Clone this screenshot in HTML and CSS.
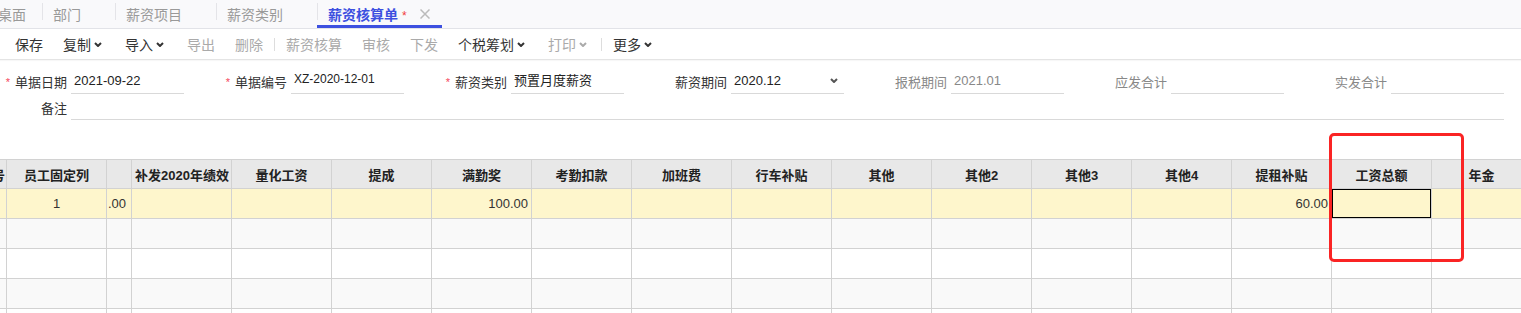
FILE: index.html
```html
<!DOCTYPE html>
<html lang="zh-CN">
<head>
  <meta charset="UTF-8" />
  <meta name="viewport" content="width=device-width, initial-scale=1" />
  <title>薪资核算单</title>
  <link rel="stylesheet" href="styles.css">
</head>
<body>
<div class="page">
  <nav class="tabs">
    <div class="tab tab-home">桌面</div>
    <span class="tab-sep"></span>
    <div class="tab">部门</div>
    <span class="tab-sep"></span>
    <div class="tab">薪资项目</div>
    <span class="tab-sep"></span>
    <div class="tab">薪资类别</div>
    <span class="tab-sep"></span>
    <div class="tab active">薪资核算单<span class="dirty">*</span>
      <svg class="close" width="10" height="10" viewBox="0 0 10 10"><path d="M0.5 0.5L9.5 9.5M9.5 0.5L0.5 9.5" /></svg>
    </div>
  </nav>

  <div class="toolbar">
    <span class="btn">保存</span>
    <span class="btn">复制<svg class="caret" width="8" height="5" viewBox="0 0 8 5"><polyline points="1,1 4,4 7,1" /></svg></span>
    <span class="btn">导入<svg class="caret" width="8" height="5" viewBox="0 0 8 5"><polyline points="1,1 4,4 7,1" /></svg></span>
    <span class="btn off">导出</span>
    <span class="btn off">删除</span>
    <span class="bar-sep"></span>
    <span class="btn off">薪资核算</span>
    <span class="btn off">审核</span>
    <span class="btn off">下发</span>
    <span class="btn">个税筹划<svg class="caret" width="8" height="5" viewBox="0 0 8 5"><polyline points="1,1 4,4 7,1" /></svg></span>
    <span class="btn off">打印<svg class="caret" width="8" height="5" viewBox="0 0 8 5"><polyline points="1,1 4,4 7,1" /></svg></span>
    <span class="bar-sep"></span>
    <span class="btn">更多<svg class="caret" width="8" height="5" viewBox="0 0 8 5"><polyline points="1,1 4,4 7,1" /></svg></span>
  </div>

  <form class="head-form">
    <div class="form-row">
      <div class="field">
        <label><span class="req">*</span>单据日期</label>
        <div class="value">2021-09-22</div>
      </div>
      <div class="field">
        <label><span class="req">*</span>单据编号</label>
        <div class="value code">XZ-2020-12-01</div>
      </div>
      <div class="field">
        <label><span class="req">*</span>薪资类别</label>
        <div class="value">预置月度薪资</div>
      </div>
      <div class="field">
        <label>薪资期间</label>
        <div class="value select">2020.12<svg class="caret" width="8" height="5" viewBox="0 0 8 5"><polyline points="1,1 4,4 7,1" /></svg></div>
      </div>
      <div class="field muted">
        <label>报税期间</label>
        <div class="value">2021.01</div>
      </div>
      <div class="field muted">
        <label>应发合计</label>
        <div class="value"></div>
      </div>
      <div class="field muted">
        <label>实发合计</label>
        <div class="value"></div>
      </div>
    </div>
    <div class="form-row">
      <div class="field wide">
        <label>备注</label>
        <div class="value"></div>
      </div>
    </div>
  </form>

  <div class="grid-wrap">
    <table class="grid">
      <colgroup>
        <col class="c-no"><col class="c-w"><col class="c-split">
        <col class="c-w"><col class="c-w"><col class="c-w"><col class="c-w"><col class="c-w">
        <col class="c-w"><col class="c-w"><col class="c-w"><col class="c-w"><col class="c-w">
        <col class="c-w"><col class="c-w"><col class="c-w"><col class="c-w">
      </colgroup>
      <thead>
        <tr>
          <th class="num">序号</th><th>员工固定列</th><th></th>
          <th>补发2020年绩效</th><th>量化工资</th><th>提成</th><th>满勤奖</th><th>考勤扣款</th>
          <th>加班费</th><th>行车补贴</th><th>其他</th><th>其他2</th><th>其他3</th>
          <th>其他4</th><th>提租补贴</th><th>工资总额</th><th>年金</th>
        </tr>
      </thead>
      <tbody>
        <tr class="current">
          <td></td><td class="center">1</td><td class="cut">.00</td>
          <td></td><td></td><td></td><td class="amt">100.00</td><td></td>
          <td></td><td></td><td></td><td></td><td></td>
          <td></td><td class="amt">60.00</td><td class="focus"></td><td></td>
        </tr>
        <tr class="alt">
          <td></td><td></td><td></td><td></td><td></td><td></td><td></td><td></td><td></td>
          <td></td><td></td><td></td><td></td><td></td><td></td><td></td><td></td>
        </tr>
        <tr>
          <td></td><td></td><td></td><td></td><td></td><td></td><td></td><td></td><td></td>
          <td></td><td></td><td></td><td></td><td></td><td></td><td></td><td></td>
        </tr>
        <tr class="alt">
          <td></td><td></td><td></td><td></td><td></td><td></td><td></td><td></td><td></td>
          <td></td><td></td><td></td><td></td><td></td><td></td><td></td><td></td>
        </tr>
        <tr>
          <td></td><td></td><td></td><td></td><td></td><td></td><td></td><td></td><td></td>
          <td></td><td></td><td></td><td></td><td></td><td></td><td></td><td></td>
        </tr>
      </tbody>
    </table>
  </div>

  <div class="mark"></div>
</div>
</body>
</html>
```

FILE: styles.css
```css
html, body { margin: 0; padding: 0; background: #fff; overflow: hidden; }
body { font-family: "Liberation Sans", "Noto Sans CJK SC", sans-serif; font-size: 13px; color: #333; }
.page { position: relative; width: 1521px; height: 313px; overflow: hidden; }

/* tabs */
.tabs { display: flex; align-items: center; height: 28px; background: #f9f9fb; border-bottom: 1px solid #e2e3e8; margin-left: -12px; font-size: 14px; color: #999; }
.tab { display: flex; align-items: center; height: 28px; box-sizing: border-box; padding: 0 34px 0 10px; white-space: nowrap; }
.tab-home { padding-right: 16px; }
.tab-sep { width: 1px; height: 17px; background: #e4e4e8; margin-bottom: 5px; }
.tab.active { color: #3d50e0; font-weight: bold; padding: 0 12px 0 10px; border-bottom: 3px solid #3d50e0; padding-top: 3px; margin-left: -1px; padding-left: 11px; }
.dirty { color: #f23c3c; font-size: 12px; font-weight: normal; margin-left: 4px; align-self: flex-start; margin-top: 6px; }
.close { margin-left: 13px; stroke: #bbb; stroke-width: 1.5; fill: none; }

/* toolbar */
.toolbar { display: flex; align-items: center; height: 30px; padding-left: 5px; border-bottom: 1px solid #e4e4e4; box-shadow: 0 1px 1px rgba(0,0,0,0.03); font-size: 14px; color: #333; }
.btn { display: flex; align-items: center; padding: 0 10px; white-space: nowrap; }
.btn.off { color: #aaa; }
.caret { margin: 0 3px; fill: none; stroke: currentColor; stroke-width: 2; }
.bar-sep { width: 1px; height: 13px; background: #ddd; margin: 0 1px; }

/* header form */
.head-form { padding-top: 9px; }
.form-row { display: flex; margin-bottom: 1px; }
.field { display: flex; align-items: center; width: 220px; flex: none; }
.field label { width: 71px; box-sizing: border-box; padding-right: 4px; text-align: right; color: #333; white-space: nowrap; }
.req { color: #f5475a; font-size: 11px; margin-right: 5px; position: relative; top: -1px; }
.value { width: 113px; height: 25px; box-sizing: border-box; border-bottom: 1px solid #d9d9d9; padding-left: 3px; line-height: 24px; color: #222; white-space: nowrap; }
.value.code { font-size: 12px; line-height: 20px; }
.value.select { display: flex; align-items: center; justify-content: space-between; padding-right: 3px; }
.value.select .caret { color: #555; margin-bottom: 2px; }
.field.muted label, .field.muted .value { color: #888; }
.field.wide { width: 1504px; }
.field.wide .value { width: 1433px; }

/* grid */
.grid-wrap { margin-top: 39px; overflow: hidden; }
.grid { border-collapse: collapse; table-layout: fixed; margin-left: -34px; width: 1565px; }
.grid col.c-no { width: 40px; }
.grid col.c-w { width: 100px; }
.grid col.c-split { width: 25px; }
.grid th, .grid td { border: 1px solid #d2d2d2; padding: 0 3px; white-space: nowrap; overflow: hidden; }
.grid th { height: 28px; background: #e8e8e8; font-weight: bold; color: #222; text-align: center; }
.grid th.num { text-align: right; padding-right: 1px; }
.grid td { height: 29px; }
.grid tr.current td { background: #fef6cc; }
.grid tr.alt td { background: #f9f9f9; }
.grid td.center { text-align: center; }
.grid td.amt { text-align: right; }
.grid td.cut { padding-left: 1px; }
.grid td.focus { box-shadow: inset 0 0 0 1px #000; }

/* annotation */
.mark { position: absolute; left: 1329px; top: 133px; width: 135px; height: 129px; box-sizing: border-box; border: 3px solid #fa2424; border-radius: 5px; }
```
